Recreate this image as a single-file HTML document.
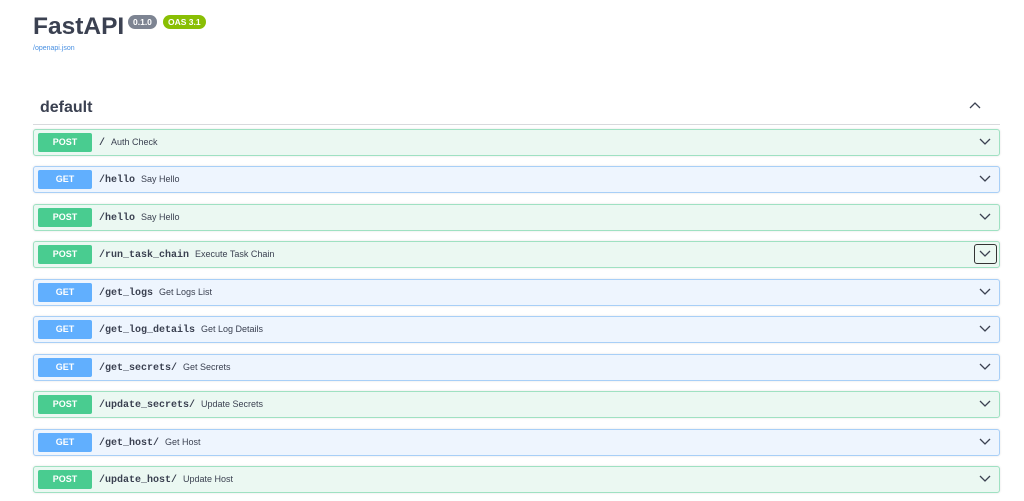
<!DOCTYPE html>
<html><head><style>
body{margin:0;width:1024px;height:501px;background:#fff;font-family:"Liberation Sans",sans-serif;position:relative;overflow:hidden;color:#3b4151}
.t{position:absolute;left:33px;top:13px;font-size:24.5px;font-weight:bold;color:#3b4151}
.b{position:absolute;top:15px;height:14px;line-height:14px;border-radius:7px;color:#fff;font-size:8.5px;font-weight:bold;padding:0 5px}
.l{position:absolute;left:33px;top:45px;font-size:7px;color:#4990e2}
.d{position:absolute;left:40px;top:99px;font-size:16px;font-weight:bold}
.line{position:absolute;left:33px;top:124px;width:967px;height:1px;background:#d8dadd}
.r{position:absolute;left:33px;width:965px;height:25px;border:1px solid;border-radius:3px;box-shadow:0 0 2px rgba(0,0,0,.12)}
.post{background:#ebf8f2;border-color:#9fe1c2}
.get{background:#eef5fe;border-color:#a8cff7}
.m{position:absolute;left:4px;top:3px;width:54px;height:19px;border-radius:2px;color:#fff;font-weight:bold;font-size:9px;line-height:19px;text-align:center}
.post .m{background:#49cc90}.get .m{background:#61affe}
.p{position:absolute;left:65px;top:0;line-height:25px;font-family:"Liberation Mono",monospace;font-weight:bold;font-size:10px;color:#3b4151}
.p span{font-family:"Liberation Sans",sans-serif;font-weight:normal;font-size:9px;margin-left:6px}
.c{position:absolute;right:8px;top:7px}
</style></head><body>
<div class="t">FastAPI</div>
<div class="b" style="left:128px;background:#7d8492">0.1.0</div>
<div class="b" style="left:163px;background:#89bf04">OAS 3.1</div>
<div class="l">/openapi.json</div>
<div class="d">default</div>
<svg style="position:absolute;left:969px;top:101px" width="12" height="9"><path d="M1 7 L6 2 L11 7" fill="none" stroke="#3b4151" stroke-width="1.3"/></svg>
<div class="line"></div>
<div class="r post" style="top:129px"><div class="m">POST</div><div class="p">/<span>Auth Check</span></div><svg class="c" width="12" height="9"><path d="M1 2 L6 7 L11 2" fill="none" stroke="#3b4151" stroke-width="1.3"/></svg></div>
<div class="r get" style="top:166px"><div class="m">GET</div><div class="p">/hello<span>Say Hello</span></div><svg class="c" width="12" height="9"><path d="M1 2 L6 7 L11 2" fill="none" stroke="#3b4151" stroke-width="1.3"/></svg></div>
<div class="r post" style="top:204px"><div class="m">POST</div><div class="p">/hello<span>Say Hello</span></div><svg class="c" width="12" height="9"><path d="M1 2 L6 7 L11 2" fill="none" stroke="#3b4151" stroke-width="1.3"/></svg></div>
<div class="r post" style="top:241px"><div class="m">POST</div><div class="p">/run_task_chain<span>Execute Task Chain</span></div><div style="position:absolute;right:2px;top:2px;width:21px;height:18px;border:1.5px solid #333;border-radius:3px"></div><svg class="c" width="12" height="9"><path d="M1 2 L6 7 L11 2" fill="none" stroke="#3b4151" stroke-width="1.3"/></svg></div>
<div class="r get" style="top:279px"><div class="m">GET</div><div class="p">/get_logs<span>Get Logs List</span></div><svg class="c" width="12" height="9"><path d="M1 2 L6 7 L11 2" fill="none" stroke="#3b4151" stroke-width="1.3"/></svg></div>
<div class="r get" style="top:316px"><div class="m">GET</div><div class="p">/get_log_details<span>Get Log Details</span></div><svg class="c" width="12" height="9"><path d="M1 2 L6 7 L11 2" fill="none" stroke="#3b4151" stroke-width="1.3"/></svg></div>
<div class="r get" style="top:354px"><div class="m">GET</div><div class="p">/get_secrets/<span>Get Secrets</span></div><svg class="c" width="12" height="9"><path d="M1 2 L6 7 L11 2" fill="none" stroke="#3b4151" stroke-width="1.3"/></svg></div>
<div class="r post" style="top:391px"><div class="m">POST</div><div class="p">/update_secrets/<span>Update Secrets</span></div><svg class="c" width="12" height="9"><path d="M1 2 L6 7 L11 2" fill="none" stroke="#3b4151" stroke-width="1.3"/></svg></div>
<div class="r get" style="top:429px"><div class="m">GET</div><div class="p">/get_host/<span>Get Host</span></div><svg class="c" width="12" height="9"><path d="M1 2 L6 7 L11 2" fill="none" stroke="#3b4151" stroke-width="1.3"/></svg></div>
<div class="r post" style="top:466px"><div class="m">POST</div><div class="p">/update_host/<span>Update Host</span></div><svg class="c" width="12" height="9"><path d="M1 2 L6 7 L11 2" fill="none" stroke="#3b4151" stroke-width="1.3"/></svg></div>
</body></html>
